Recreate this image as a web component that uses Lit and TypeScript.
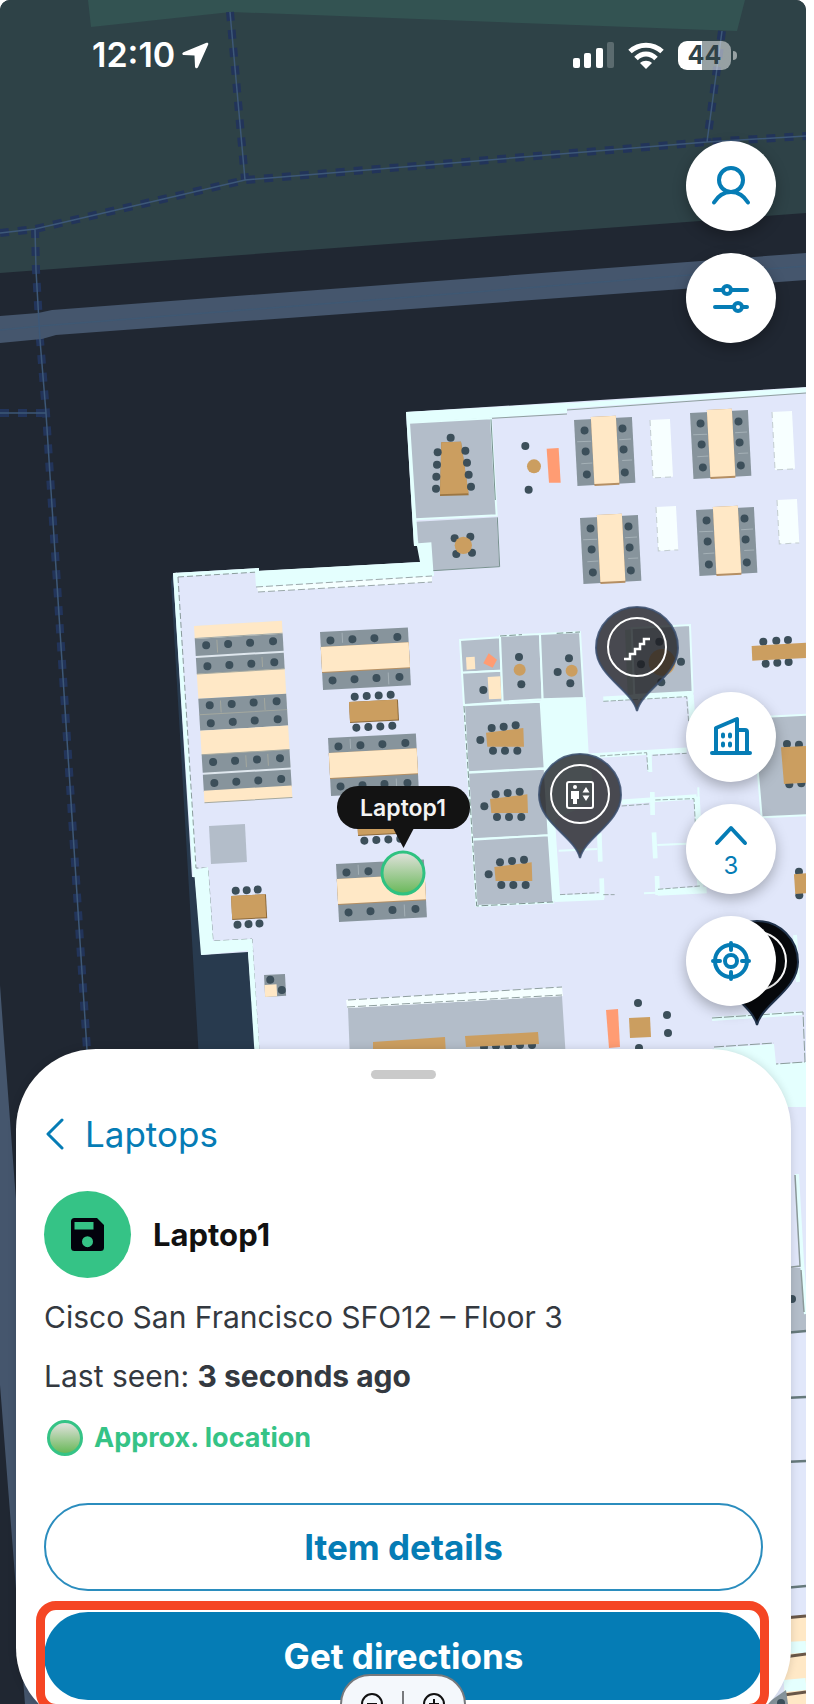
import { LitElement, html, svg, css } from "lit";
import { customElement, property } from "lit/decorators.js";

const WOOD = "#cb9e60";
const CREAM = "#ffe8c6";
const DESK = "#87949c";
const ROOM = "#b3bdc9";
const WALL = "#e4fffe";
const CORAL = "#ff9c73";
const SEAT = "#3c4f5a";

type Pt = [number, number];

const seats = (list: Pt[], r = 4) =>
  list.map(([x, y]) => svg`<circle cx=${x} cy=${y} r=${r} fill=${SEAT}></circle>`);

const shape = (points: string, fill: string) => svg`<polygon points=${points} fill=${fill}></polygon>`;

const room = (points: string) =>
  svg`<polygon points=${points} fill=${ROOM} stroke=${WALL} stroke-width="6"></polygon>`;

const wall = (d: string, w: number) => svg`<path d=${d} stroke=${WALL} stroke-width=${w} fill="none"></path>`;

const grid = (xs: number[], ys: number[]): Pt[] => ys.flatMap((y) => xs.map((x) => [x, y] as Pt));

/* Two rows of seats left and right of a shared table top. */
const deskTall = (x: number, y: number) => svg`
  <g transform="translate(${x} ${y}) rotate(-3)">
    <rect width="58" height="66" fill=${DESK}></rect>
    <rect x="17" y="-2" width="25" height="69" fill="#b58f63"></rect>
    <rect x="17" y="-2" width="25" height="67" fill=${CREAM}></rect>
    <path d="M2 22h14M44 22h12M5 44h11M46 43h10" stroke="#a4b0b6" stroke-width="1"></path>
    ${seats(grid([10, 48], [11, 32, 55]))}
  </g>`;

/* Two rows of seats above and below a shared table top. */
const deskWide = (x: number, y: number) => svg`
  <g transform="translate(${x} ${y}) rotate(-3)">
    <rect width="88" height="58" fill=${DESK}></rect>
    <rect y="15" width="88" height="26" fill="#b58f63"></rect>
    <rect y="15" width="88" height="25" fill=${CREAM}></rect>
    <path d="M22 2v10M66 44v12" stroke="#a4b0b6" stroke-width="1"></path>
    ${seats(grid([10, 32, 54, 77], [9, 49]))}
  </g>`;

const benchTable = (x: number, y: number, w: number, h: number, xs: number[]) => svg`
  <g transform="translate(${x} ${y}) rotate(-3)">
    ${seats(grid(xs, [-5, h + 5]))}
    <rect width=${w} height=${h} fill="#8c6a3c"></rect>
    <rect width=${w - 1} height=${h - 1} fill=${WOOD}></rect>
  </g>`;

const meeting = (x: number, y: number) => svg`
  <g transform="translate(${x} ${y})">
    <polygon points="0,0 112,-14 114,42 4,42" fill=${WOOD}></polygon>
    ${seats([[17, -14], [53, -18], [89, -22], [-17, 22], [21, 54], [57, 54], [94, 54]], 12)}
  </g>`;

const pin = (x: number, y: number, fill: string, edge: string, glyph: unknown) => svg`
  <g transform="translate(${x} ${y})">
    <path d="M0 63C-5 42-41 28-41 0A41 41 0 0 1 41 0C41 28 5 42 0 63Z" fill=${fill} stroke=${edge} stroke-width="2"></path>
    <circle cy="-1" r="29" fill="none" stroke="#fff" stroke-width="2"></circle>
    ${glyph}
  </g>`;

@customElement("floor-map")
class FloorMap extends LitElement {
  @property() label = "";

  static styles = css`
    :host { display: block; }
    svg { display: block; width: 100%; height: 100%; }
    .tag { font: 600 23px Inter, "Liberation Sans", sans-serif; fill: #f4f4f4; text-anchor: middle; }
  `;

  streets() {
    const trails =
      "M230 12L245 180M0 233L35 229L245 180L707 142L807 136M722 31L707 142M35 229L36 270L40 340L46 413L87 1050M0 413H46";
    return svg`
      <rect width="806" height="1704" fill="#202732"></rect>
      <polygon points="0,0 806,0 806,213 0,273" fill="#2e4247"></polygon>
      <polygon points="88,0 91,27 231,12 737,31 745,0" fill="#335352"></polygon>
      <path d=${trails} fill="none" stroke="#22345a" stroke-width="8" stroke-dasharray="9 9"></path>
      <polygon points="0,316 38,313 52,310 806,253 806,280 56,335 42,339 0,343" fill="#45566d"></polygon>
      <path d="M0 330L40 326L806 266" stroke="#3f5873" stroke-width="1.5" fill="none"></path>
      <polygon points="0,985 4,1040 15,1187 60,1704 25,1704 0,1385" fill="#45566d"></polygon>
      <path d=${trails} fill="none" stroke="#3d5878" stroke-width="1.5"></path>`;
  }

  shell() {
    return svg`
      ${shape("171,582 199,1060 262,1060 248,950 202,950 173,573", "#283a4e")}
      ${shape("406,412 806,387 806,1704 262,1704 256,1050 248,952 202,955 195,877 192,877 173,573 259,568 259,571 420,562 420,546 414,546", "#e1e7fa")}
      ${shape("406,412 567,403 567,413 410,423", WALL)}
      ${wall("M566 406L806 390", 5)}
      <path d="M410 423L567 414M567 410L806 393" stroke="#8fa09f" stroke-width="1" fill="none"></path>
      ${wall("M408 412L416 546", 4)}
      ${wall("M174 575L259 570M175 573L195 877", 4)}
      <path d="M178 577L258 572M178 577L196 868L208 868L213 941L252 939L259 1050" stroke="#8a9c9c" stroke-width="1" stroke-dasharray="6 3" fill="none"></path>
      ${shape("416,541 432,541 434,576 256,587 255,571 420,562", WALL)}
      ${shape("257,587 432,576 432,582 258,592", "#f5ffff")}
      <path d="M256 587L432 576M258 592L432 582" stroke="#9aa8aa" stroke-width="1" stroke-dasharray="7 3"></path>
      ${shape("194,870 208,867 213,941 252,939 253,950 201,955", WALL)}
      ${wall("M250 945L257 1052", 5)}`;
  }

  northWing() {
    return svg`
      <g transform="translate(390 380) scale(.3333)">
        ${room("57,128 303,115 320,406 76,418")}
        ${shape("80,425 320,412 328,559 130,572 124,487 85,490", ROOM)}
        <path d="M303 118L316 360M322 412L329 560L130 572" fill="none" stroke="#78928f" stroke-width="3"></path>
        ${shape("154,187 213,185 236,346 150,348", "#9c7642")}
        ${shape("154,187 213,185 236,340 150,343", WOOD)}
        ${seats([[182, 173], [143, 217], [141, 254], [139, 290], [138, 326], [226, 212], [231, 248], [236, 284], [243, 320], [194, 475], [241, 470], [199, 522], [246, 518], [406, 198], [416, 329]], 12)}
        <circle cx="220" cy="496" r="26" fill=${WOOD}></circle>
        <circle cx="432" cy="259" r="21" fill=${WOOD}></circle>
        ${shape("470,206 506,204 512,308 477,308", CORAL)}
      </g>
      ${[[650, 420, 58], [772, 412, 58], [656, 507, 44], [777, 500, 44]].map(
        ([x, y, h]) => svg`<g transform="translate(${x} ${y}) rotate(-3)">
          <rect width="20" height=${h} fill="#f7ffff"></rect>
          <path d="M0 0V${h}H20" fill="none" stroke="#c2cccf" stroke-width="1" stroke-dasharray="6 4"></path>
        </g>`
      )}
      ${deskTall(574, 420)} ${deskTall(690, 413)} ${deskTall(580, 518)} ${deskTall(696, 510)}`;
  }

  westWing() {
    const rows: [number, number, string][] = [
      [0, 12, CREAM], [13, 17, DESK], [32, 16, DESK], [48, 25, CREAM], [73, 32, DESK],
      [105, 24, CREAM], [129, 18, DESK], [149, 17, DESK], [165, 12, CREAM],
    ];
    return svg`
      <g transform="translate(194 626) rotate(-3.4)">
        <rect x="1" width="87" height="177" fill="#dfe7ee"></rect>
        ${rows.map(([y, h, c]) => svg`<rect y=${y} width="88" height=${h} fill=${c}></rect>`)}
        <path d="M22 15v13M66 35v10M22 76v12M66 76v12M0 89h88M44 132v12M66 132v12M0 12.5h88M0 48h88M0 129h88M0 177h88" stroke="#a4a89f" stroke-width="1"></path>
        ${seats(grid([11, 33, 55, 78], [20, 41, 80, 98, 137, 158]))}
      </g>
      ${deskWide(320, 632)} ${deskWide(328, 738)} ${deskWide(336, 864)}
      ${benchTable(349, 702, 49, 21, [6, 18, 30, 42])}
      ${benchTable(357, 815, 49, 21, [6, 18, 30, 42])}
      ${benchTable(231, 896, 35, 24, [5, 16, 27])}
      <rect transform="translate(209 826) rotate(-3)" width="36" height="38" fill=${ROOM}></rect>
      <g transform="translate(264 975) rotate(-3)">
        <rect width="21" height="22" fill=${DESK}></rect>
        <rect y="10" width="12" height="12" fill=${CREAM}></rect>
        ${seats([[6, 5], [17, 16]])}
      </g>`;
  }

  eastWing() {
    return svg`
      <g transform="translate(440 600) scale(.3333)">
        ${room("60,120 180,112 184,212 66,218")} ${room("66,218 184,212 188,307 72,315")}
        ${room("180,108 300,102 308,298 188,305")} ${room("300,102 420,96 432,294 308,298")}
        ${room("72,316 302,305 314,505 84,517")} ${room("84,518 314,506 326,706 97,718")}
        ${room("97,719 326,706 340,908 110,918")}
        <path d="M72 318L110 918L340 906M180 108L246 104M350 100L420 96" stroke="#7d9391" stroke-width="3" stroke-dasharray="20 8" fill="none"></path>
        ${shape("302,300 437,292 446,460 466,600 345,660 360,884 340,908", WALL)}
        ${wall("M446 468L740 450M545 606L770 590M490 297L760 282", 15)}
        ${wall("M628 460L630 516M637 576L638 645M642 697L646 775M651 828L653 885M485 835L487 896M478 700L481 785", 14)}
        ${wall("M770 590L776 690M752 285L758 370M775 780L782 870", 18)}
        ${wall("M653 877L800 870M345 896L492 890", 20)}
        ${wall("M356 752L472 747M652 735L740 731M612 880L650 878M775 562L776 600", 6)}
        <path d="M490 304L740 290L746 365M480 468L620 458L624 516M638 466L740 460M545 618L628 612M646 600L762 596L766 668M360 884L476 878M654 868L780 858M490 884H524" stroke="#8a9c9b" stroke-width="2.5" stroke-dasharray="16 6" fill="none"></path>
        ${shape("555,90 575,88 583,283 563,285", "#c5d8d6")}
        ${room("575,85 750,75 758,275 583,285")}
        ${seats([[658, 125], [603, 193], [723, 185], [664, 247]], 12)}
        <circle cx="666" cy="187" r="40" fill=${WOOD}></circle>
        ${shape("78,172 104,170 106,207 80,209", CREAM)}
        ${shape("146,160 171,179 158,203 130,190", CORAL)}
        ${shape("143,231 181,229 184,296 147,298", CREAM)}
        ${seats([[130, 270], [237, 171], [244, 253], [387, 175], [353, 216], [391, 250]], 12)}
        <circle cx="239" cy="209" r="18" fill=${WOOD}></circle>
        <circle cx="395" cy="212" r="18" fill=${WOOD}></circle>
        ${meeting(138, 398)} ${meeting(150, 597)} ${meeting(163, 801)}
        ${seats([[970, 125], [1009, 122], [1044, 120], [977, 191], [1012, 188], [1046, 186]], 12)}
        ${shape("935,138 1098,128 1098,174 937,182", WOOD)}
        ${room("940,352 1108,344 1108,645 965,652")}
        ${seats([[1041, 432], [1077, 434], [1048, 553], [1084, 550], [1077, 815], [1078, 886]], 12)}
        ${shape("1023,442 1100,438 1100,548 1032,552", WOOD)}
        ${shape("1062,823 1100,820 1100,880 1066,882", WOOD)}
      </g>`;
  }

  southWing() {
    return svg`
      ${shape("348,1008 562,996 566,1060 350,1060", ROOM)}
      ${shape("346,1000 562,987 563,996 347,1008", "#f5ffff")}
      <path d="M347 1007L562 995M348 1000L562 987" stroke="#8f9f9f" stroke-width="1" stroke-dasharray="8 3"></path>
      ${seats([[484, 1047], [496, 1046], [508, 1046], [520, 1045], [532, 1045]])}
      ${shape("373,1042 445,1037 446,1056 373,1056", WOOD)}
      ${shape("465,1036 538,1032 539,1044 466,1047", WOOD)}
      ${shape("606,1010 618,1009 620,1047 609,1048", CORAL)}
      ${seats([[638, 1003], [667, 1015], [668, 1033], [639, 1048]])}
      ${shape("629,1018 650,1017 651,1037 630,1038", WOOD)}
      ${wall("M712 1019L802 1013M795 935L798 982", 4)}
      ${shape("714,1048 774,1044 776,1064 806,1062 806,1107 714,1107", WALL)}
      <path d="M712 1018L803 1012L805 1062L776 1064M714 1047L774 1043" fill="none" stroke="#8a9c9b" stroke-width="1" stroke-dasharray="10 2"></path>
      ${shape("784,1268 801,1268 806,1312 806,1331 784,1332", ROOM)}
      ${wall("M797 1174L802 1262L806 1314", 4)}
      <path d="M795 1175L800 1266L784 1268M801 1270L804 1312" fill="none" stroke="#8c9a9a" stroke-width="1.5"></path>
      ${seats([[792, 1299]])}
      ${shape("784,1618 806,1617 806,1704 784,1704", CREAM)}
      ${wall("M784 1648L806 1647M784 1686L806 1684", 12)}
      <path d="M784 1333L806 1331M784 1398L806 1397M784 1462L806 1461M784 1588L806 1586" stroke="#66797b" stroke-width="2.5"></path>
      <path d="M784 1618L806 1616M784 1657L806 1654M784 1695L806 1692" stroke="#695748" stroke-width="3"></path>
      ${shape("766,1704 786,1690 788,1704", DESK)}
      ${seats([[781, 1703]])}`;
  }

  render() {
    const glass = "rgba(28, 28, 32, 0.78)";
    const glassEdge = "rgba(58, 78, 108, 0.85)";
    return html`
      <svg viewBox="0 0 806 1704" preserveAspectRatio="xMidYMin slice" role="img" aria-label="Floor plan">
        <defs>
          <linearGradient id="fade" x1="0" y1="0" x2="0" y2="1">
            <stop offset="0" stop-color="#e2e2de"></stop>
            <stop offset="1" stop-color="#68b858"></stop>
          </linearGradient>
        </defs>
        ${this.streets()} ${this.shell()} ${this.northWing()} ${this.westWing()} ${this.eastWing()} ${this.southWing()}
        ${pin(637, 648, glass, glassEdge, svg`<path d="M-13 11h6v-5h5v-5h5v-5h4v-5h6" fill="none" stroke="#fff" stroke-width="2.5"></path>`)}
        ${pin(580, 795, glass, glassEdge, svg`
          <rect x="-13" y="-13" width="26" height="26" rx="2" fill="none" stroke="#fff" stroke-width="2"></rect>
          <circle cx="-5" cy="-8" r="2" fill="#fff"></circle>
          <path d="M-9-4h8v8h-2v5h-4v-5h-2zM6-8l3.500 5.500h-7zM6 6l3.500-5.500h-7z" fill="#fff"></path>`)}
        ${pin(757, 962, "#07090c", "#22344c", svg``)}
        <rect x="337" y="786" width="133" height="43" rx="21" fill="#131313"></rect>
        <path d="M393 828h21l-10.500 20z" fill="#131313"></path>
        <text class="tag" x="403" y="816">${this.label}</text>
        <circle cx="403" cy="873" r="21" fill="url(#fade)" stroke="#2fc281" stroke-width="3"></circle>
      </svg>`;
  }
}

@customElement("status-bar")
class StatusBar extends LitElement {
  static styles = css`
    :host { display: flex; justify-content: space-between; align-items: center; padding: 35px 69px 0 92px; color: #fff; font-family: Inter, "Liberation Sans", sans-serif; }
    div { display: flex; align-items: center; }
    .left { gap: 7px; }
    .right { gap: 14px; }
    .time { font-size: 34px; line-height: 40px; font-weight: 600; }
    .battery { gap: 2px; }
    .cell { width: 53px; height: 29px; border-radius: 9px; justify-content: center; font-size: 25px; font-weight: 700; color: #2e4247; background: linear-gradient(90deg, #fff 45%, rgba(255, 255, 255, 0.5) 45%); }
    .cap { width: 4px; height: 9px; border-radius: 0 4px 4px 0; background: rgba(255, 255, 255, 0.5); }
  `;

  render() {
    return html`
      <div class="left">
        <span class="time">12:10</span>
        <svg width="27" height="27" viewBox="0 0 27 27" aria-hidden="true">
          <path d="M24.500.8L1.500 10.200C-.2 11-.1 13 1.800 13.100L12.500 13.500L13 24.500C13.100 26.600 15.200 27 16 25.200L26.200 2.500C26.700 1.200 25.700.3 24.500.8Z" fill="#fff"></path>
        </svg>
      </div>
      <div class="right">
        <svg width="41" height="27" viewBox="0 0 41 27" aria-hidden="true" fill="#fff">
          <rect y="16" width="7" height="10" rx="2"></rect>
          <rect x="11" y="11" width="7" height="15" rx="2"></rect>
          <rect x="23" y="6" width="7" height="20" rx="2"></rect>
          <rect x="34" y="0" width="7" height="26" rx="2" opacity=".22"></rect>
        </svg>
        <svg width="36" height="27" viewBox="0 0 36 27" aria-hidden="true" fill="none" stroke="#fff" stroke-width="5">
          <path d="M2 9.500C11 1 25 1 34 9.500"></path>
          <path d="M8 16.500C14 10.500 22 10.500 28 16.500"></path>
          <path d="M12 21C15.500 18 20.500 18 24 21L18 27Z" fill="#fff" stroke="none"></path>
        </svg>
        <div class="battery"><div class="cell">44</div><div class="cap"></div></div>
      </div>`;
  }
}

@customElement("app-root")
class AppRoot extends LitElement {
  static styles = css`
    :host { display: block; box-sizing: border-box; height: 100vh; padding-right: 8px; background: #fff; overflow: hidden; font-family: Inter, "Liberation Sans", sans-serif; }
    * { box-sizing: border-box; }
    h1, p { margin: 0; }
    button { font-family: inherit; cursor: pointer; padding: 0; border: 0; }
    .screen { display: grid; height: 100%; border-radius: 10px 10px 0 0; overflow: hidden; }
    .screen > * { grid-area: 1 / 1; min-height: 0; }
    .overlay { position: relative; display: flex; flex-direction: column; height: calc(100% + 24px); }
    .controls { display: flex; flex-direction: column; align-items: flex-end; gap: 22px; padding-right: 30px; }
    .top { margin-top: 66px; }
    .bottom { margin-top: auto; margin-bottom: 43px; }
    .round { width: 90px; height: 90px; border-radius: 50%; background: #fff; color: #057cb5; box-shadow: 0 5px 14px rgba(0, 0, 0, 0.28); display: flex; flex-direction: column; align-items: center; justify-content: center; gap: 2px; font-size: 24px; line-height: 28px; }
    .round svg { fill: none; stroke: currentColor; stroke-width: 4; stroke-linecap: round; stroke-linejoin: round; }
    .sheet { margin: 0 15px 0 16px; padding: 21px 28px 28px; background: #fff; border-radius: 80px; box-shadow: 0 0 8px rgba(0, 0, 0, 0.14); display: flex; flex-direction: column; color: #343940; }
    .handle { align-self: center; width: 65px; height: 9px; border-radius: 5px; background: #cacaca; }
    .back { align-self: flex-start; display: flex; align-items: center; gap: 20px; margin-top: 33px; padding-left: 1px; font-size: 35px; line-height: 44px; color: #057cb5; text-decoration: none; }
    .asset { display: flex; align-items: center; gap: 22px; margin-top: 35px; }
    .badge { width: 87px; height: 87px; border-radius: 50%; background: #35c386; display: grid; place-items: center; }
    h1 { font-size: 31px; line-height: 40px; font-weight: 700; color: #111; }
    p { font-size: 30px; line-height: 40px; margin-top: 19px; }
    .approx { display: flex; align-items: center; gap: 11px; margin: 24px 0 47px; padding-left: 3px; font-size: 27px; line-height: 36px; font-weight: 700; color: #35c386; }
    .dot { width: 36px; height: 36px; border-radius: 50%; border: 3px solid #35c386; background: linear-gradient(#e2e2de, #68b858); }
    .wide { width: 100%; height: 88px; border-radius: 44px; font-size: 35px; font-weight: 700; }
    .outline { background: #fff; color: #057cb5; border: 2px solid #2b8dbe; }
    .filled { display: block; background: #057cb5; color: #fff; }
    .target { position: relative; margin-top: 21px; }
    .target::after { content: ""; position: absolute; inset: -11px -6px -13px -8px; border: 9px solid #f54624; border-radius: 20px; pointer-events: none; }
    .zoom { position: absolute; top: 62px; left: 50%; width: 126px; height: 60px; margin-left: -64px; border: 2px solid #77797c; border-radius: 30px; background: #f4f8fc; display: flex; align-items: center; justify-content: space-evenly; }
    .zoom button { background: none; display: flex; }
    .zoom i { width: 2px; height: 26px; background: #77797c; }
  `;

  zoomIcon(plus: boolean) {
    return html`<svg width="24" height="24" viewBox="0 0 24 24" fill="none" stroke="#111" stroke-width="2" aria-hidden="true">
      <circle cx="12" cy="12" r="10"></circle>
      <path d=${plus ? "M7 12h10M12 7v10" : "M7 12h10"}></path>
    </svg>`;
  }

  render() {
    return html`
      <main class="screen">
        <floor-map label="Laptop1"></floor-map>
        <div class="overlay">
          <status-bar></status-bar>
          <div class="controls top">
            <button class="round" aria-label="Profile">
              <svg width="44" height="44" viewBox="0 0 44 44"><circle cx="22" cy="16" r="12"></circle><path d="M5 38.500C9 32 15 28 22 28S35 32 39 38.500"></path></svg>
            </button>
            <button class="round" aria-label="Filters">
              <svg width="44" height="44" viewBox="0 0 44 44"><path d="M6 14h7M22 14h16M6 31h18M34 31h4"></path><circle cx="18" cy="14" r="4"></circle><circle cx="29" cy="31" r="4"></circle></svg>
            </button>
          </div>
          <div class="controls bottom">
            <button class="round" aria-label="Buildings">
              <svg width="44" height="44" viewBox="0 0 44 44"><path d="M3 38H41M7 38V13L28 4V38M28 15H36Q38 15 38 17V38"></path><path d="M14 19.500v2M21 19.500v2M14 28.500v2M21 28.500v2"></path></svg>
            </button>
            <button class="round" aria-label="Choose floor">
              <svg width="36" height="32" viewBox="0 0 36 32"><path d="M4 25L18 10L32 25"></path></svg>
              3
            </button>
            <button class="round" aria-label="Find my location">
              <svg width="44" height="44" viewBox="0 0 44 44"><circle cx="22" cy="22" r="16"></circle><circle cx="22" cy="22" r="6"></circle><path d="M22 4v7M22 33v7M4 22h7M33 22h7"></path></svg>
            </button>
          </div>
          <section class="sheet">
            <div class="handle"></div>
            <a class="back" href="#laptops">
              <svg width="20" height="32" viewBox="0 0 20 32" fill="none" stroke="currentColor" stroke-width="3" stroke-linecap="round" stroke-linejoin="round" aria-hidden="true"><path d="M17 2L3 16L17 30"></path></svg>
              Laptops
            </a>
            <div class="asset">
              <div class="badge">
                <svg width="33" height="33" viewBox="0 0 33 33" aria-hidden="true">
                  <path fill-rule="evenodd" fill="#02020c" d="M3.500 0H26L33 7V29.500A3.500 3.500 0 0 1 29.500 33H3.500A3.500 3.500 0 0 1 0 29.500V3.500A3.500 3.500 0 0 1 3.500 0ZM3.500 4V11.500H22.500V4ZM16.500 18.200A5.500 5.500 0 1 0 16.500 29.200A5.500 5.500 0 1 0 16.500 18.200Z"></path>
                </svg>
              </div>
              <h1>Laptop1</h1>
            </div>
            <p>Cisco San Francisco SFO12 – Floor 3</p>
            <p>Last seen: <strong>3 seconds ago</strong></p>
            <div class="approx"><span class="dot"></span>Approx. location</div>
            <button class="wide outline">Item details</button>
            <div class="target">
              <button class="wide filled">Get directions</button>
              <div class="zoom">
                <button aria-label="Zoom out">${this.zoomIcon(false)}</button>
                <i></i>
                <button aria-label="Zoom in">${this.zoomIcon(true)}</button>
              </div>
            </div>
          </section>
        </div>
      </main>`;
  }
}
